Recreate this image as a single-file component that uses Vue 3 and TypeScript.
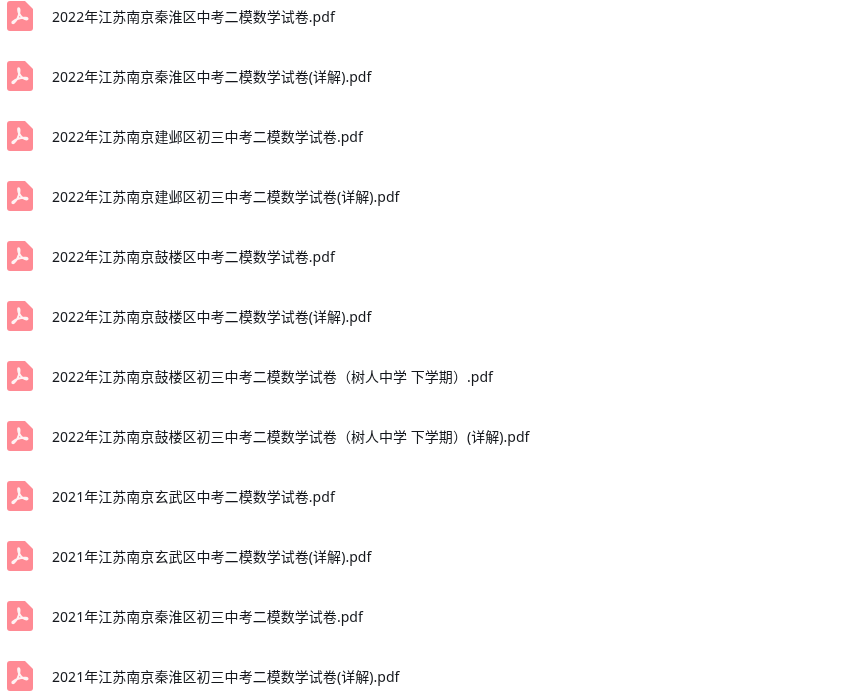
<script setup lang="ts">
const files: string[] = [
  "2022年江苏南京秦淮区中考二模数学试卷.pdf",
  "2022年江苏南京秦淮区中考二模数学试卷(详解).pdf",
  "2022年江苏南京建邺区初三中考二模数学试卷.pdf",
  "2022年江苏南京建邺区初三中考二模数学试卷(详解).pdf",
  "2022年江苏南京鼓楼区中考二模数学试卷.pdf",
  "2022年江苏南京鼓楼区中考二模数学试卷(详解).pdf",
  "2022年江苏南京鼓楼区初三中考二模数学试卷（树人中学 下学期）.pdf",
  "2022年江苏南京鼓楼区初三中考二模数学试卷（树人中学 下学期）(详解).pdf",
  "2021年江苏南京玄武区中考二模数学试卷.pdf",
  "2021年江苏南京玄武区中考二模数学试卷(详解).pdf",
  "2021年江苏南京秦淮区初三中考二模数学试卷.pdf",
  "2021年江苏南京秦淮区初三中考二模数学试卷(详解).pdf",
];
</script>

<template>
  <div class="list" lang="zh-CN">
    <div v-for="name in files" :key="name" class="row">
      <svg class="icon" viewBox="0 0 26 30" width="26" height="30">
        <path
          d="M3 0H18L26 8V27a3 3 0 0 1-3 3H3a3 3 0 0 1-3-3V3a3 3 0 0 1 3-3Z"
          fill="#ff8a94"
        />
        <path
          d="M11.6 7.2C12.6 7.2 12.6 9.4 12.4 11C12 14.4 9.6 19.4 7 21.8C5.8 22.8 4.8 21.8 5.8 20.8C8.4 18.4 14 16.4 19 16.7C21 16.8 21 18.4 19.4 18.4C16.6 18.4 13.4 15 12 12.2C11.2 10.6 10.8 7.2 11.6 7.2Z"
          fill="none"
          stroke="#fff2f3"
          stroke-width="2"
          stroke-linejoin="round"
        />
      </svg>
      <span class="name">{{ name }}</span>
    </div>
  </div>
</template>

<style scoped>
.list {
  display: flex;
  flex-direction: column;
  margin-top: -44px;
  height: 740px;
  overflow: hidden;
}

.row {
  flex: 0 0 60px;
  display: flex;
  align-items: center;
  padding-left: 7px;
}

.row:first-child {
  margin-top: 30px;
}

.icon {
  flex: none;
  margin-right: 19px;
}

.name {
  margin-top: 2px;
  font-family: "Noto Sans", "Noto Sans CJK SC", sans-serif;
  font-size: 14px;
  line-height: 20px;
  letter-spacing: 0.04px;
  color: #14171c;
  white-space: pre;
  will-change: opacity;
}
</style>

<style>
html,
body {
  background: #fff;
  overflow: hidden;
}
</style>
